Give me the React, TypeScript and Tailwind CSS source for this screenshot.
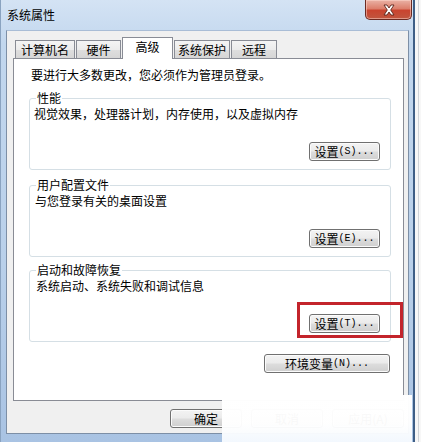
import React from "react";

const btnBg =
  "border border-[#707070] rounded-[3px] bg-[linear-gradient(to_bottom,#f3f3f3_0%,#ebebeb_48%,#dddddd_52%,#cfcfcf_100%)] shadow-[inset_0_0_0_1px_#fbfbfb]";

function Btn({ label, acc, w }: { label: string; acc?: string; w: string }) {
  return (
    <div className={`${btnBg} ${w} h-[19px] flex items-center justify-center text-[12px] leading-none`}>
      <span>{label}</span>
      {acc ? <span className="font-['Liberation_Mono',monospace] text-[10px] tracking-[0px]">{acc}</span> : null}
    </div>
  );
}

function Tab({ label, w, selected }: { label: string; w: string; selected?: boolean }) {
  if (selected) {
    return (
      <div
        className={`${w} h-[22px] -mb-px relative z-10 bg-white border border-b-0 border-[#898c95] flex items-center justify-center text-[12px] leading-none pb-[3px]`}
      >
        {label}
      </div>
    );
  }
  return (
    <div
      className={`${w} h-[18px] border border-b-0 border-[#898c95] bg-[linear-gradient(to_bottom,#f4f4f4_0%,#ececec_50%,#dedede_51%,#d6d6d6_100%)] flex items-center justify-center text-[12px] leading-none pt-[1px]`}
    >
      {label}
    </div>
  );
}

function Group({
  title,
  text,
  acc,
  highlight,
  textPl,
}: {
  title: string;
  text: string;
  acc: string;
  highlight?: boolean;
  textPl: string;
}) {
  return (
    <div className="relative w-[362px] h-[72px] border border-[#d5dfe5] rounded-[3px] flex flex-col pt-[7px] pr-[10px] pb-[8px]">
      <span className="absolute left-[6px] -top-[9px] bg-white px-[1px] text-[12px] leading-[16px]">{title}</span>
      <div className={`${textPl} text-[12px] leading-[16px]`}>{text}</div>
      <div className="mt-auto self-end">
        <Btn label="设置" acc={acc} w="w-[71px]" />
      </div>
      {highlight ? (
        <div className="absolute left-[267px] top-[31px] w-[106px] h-[36px] border-[3px] border-[#c3242b]" />
      ) : null}
    </div>
  );
}

export default function App() {
  return (
    <div className="w-[421px] h-[442px] relative overflow-hidden bg-white flex font-['Noto_Sans_CJK_SC','Microsoft_YaHei',sans-serif] text-black">
      {/* window */}
      <div className="w-[415px] h-[442px] shrink-0 flex flex-col bg-[linear-gradient(to_bottom,#d4e3f4_0%,#c2d7ee_10%,#b9d0ea_60%,#a9c3e3_100%)] border-l border-l-[#8aa3c0] border-r-2 border-r-[#3e5e86]">
        {/* title bar */}
        <div className="h-[30px] flex justify-between shrink-0">
          <div className="pl-[6px] pt-[7px] text-[12px] leading-[16px]">系统属性</div>
          <div className="mr-[1px] w-[47px] h-[20px] rounded-b-[5px] border border-t-0 border-[#6b2a22] bg-[linear-gradient(to_bottom,#eab2a5_0%,#dc7f6c_45%,#c9442f_55%,#c0563f_100%)] shadow-[inset_0_0_0_1px_rgba(255,220,210,0.5)] flex items-center justify-center">
            <svg width="16" height="12" viewBox="0 0 16 12">
              <path
                d="M3 1 L6 1 L8 4 L10 1 L13 1 L9.7 6 L13 11 L10 11 L8 8 L6 11 L3 11 L6.3 6 Z"
                fill="#ffffff"
                stroke="#5a2219"
                strokeWidth="0.9"
                strokeLinejoin="round"
              />
            </svg>
          </div>
        </div>
        {/* client */}
        <div className="ml-[5px] mr-[4px] h-[404px] shrink-0 bg-[#f0f0f0] border border-[#7d8fa6] border-t-[#a9bdd6] flex flex-col pl-[6px] pt-[6px]">
          {/* tabs */}
          <div className="h-[21px] flex items-end gap-[1px] pl-[2px]">
            <Tab label="计算机名" w="w-[60px]" />
            <Tab label="硬件" w="w-[45px]" />
            <Tab label="高级" w="w-[51px]" selected />
            <Tab label="系统保护" w="w-[56px]" />
            <Tab label="远程" w="w-[46px]" />
          </div>
          {/* panel */}
          <div className="w-[391px] h-[343px] border border-[#898c95] bg-white pl-[15px] pt-[8px] flex flex-col">
            <div className="pl-[2px] text-[12px] leading-[16px]">要进行大多数更改，您必须作为管理员登录。</div>
            <div className="mt-[15px]">
              <Group title="性能" text="视觉效果，处理器计划，内存使用，以及虚拟内存" acc="(S)..." textPl="pl-[4px]" />
            </div>
            <div className="mt-[15px]">
              <Group title="用户配置文件" text="与您登录有关的桌面设置" acc="(E)..." textPl="pl-[5px]" />
            </div>
            <div className="mt-[13px]">
              <Group title="启动和故障恢复" text="系统启动、系统失败和调试信息" acc="(T)..." textPl="pl-[6px]" highlight />
            </div>
            <div className="mt-[12px] w-[361px] flex justify-end">
              <Btn label="环境变量" acc="(N)..." w="w-[126px]" />
            </div>
          </div>
          {/* bottom buttons */}
          <div className="mt-[8px] w-[391px] flex justify-end gap-[9px]">
            <Btn label="确定" w="w-[72px]" />
            <Btn label="取消" w="w-[72px]" />
            <Btn label="应用(A)" w="w-[72px]" />
          </div>
        </div>
      </div>
      {/* area right of window */}
      <div className="flex-1 h-[442px] bg-[#f7f7f7] flex">
        <div className="w-[3px]" />
        <div className="w-px h-full bg-[#cfd3d8]" />
      </div>
      {/* watermark fade */}
      <div className="absolute left-[222px] top-[395px] w-[190px] h-[47px] bg-[linear-gradient(to_bottom,rgba(255,255,255,0.99),rgba(255,255,255,0.97)_60%,rgba(246,250,255,0.96))]" />
    </div>
  );
}
